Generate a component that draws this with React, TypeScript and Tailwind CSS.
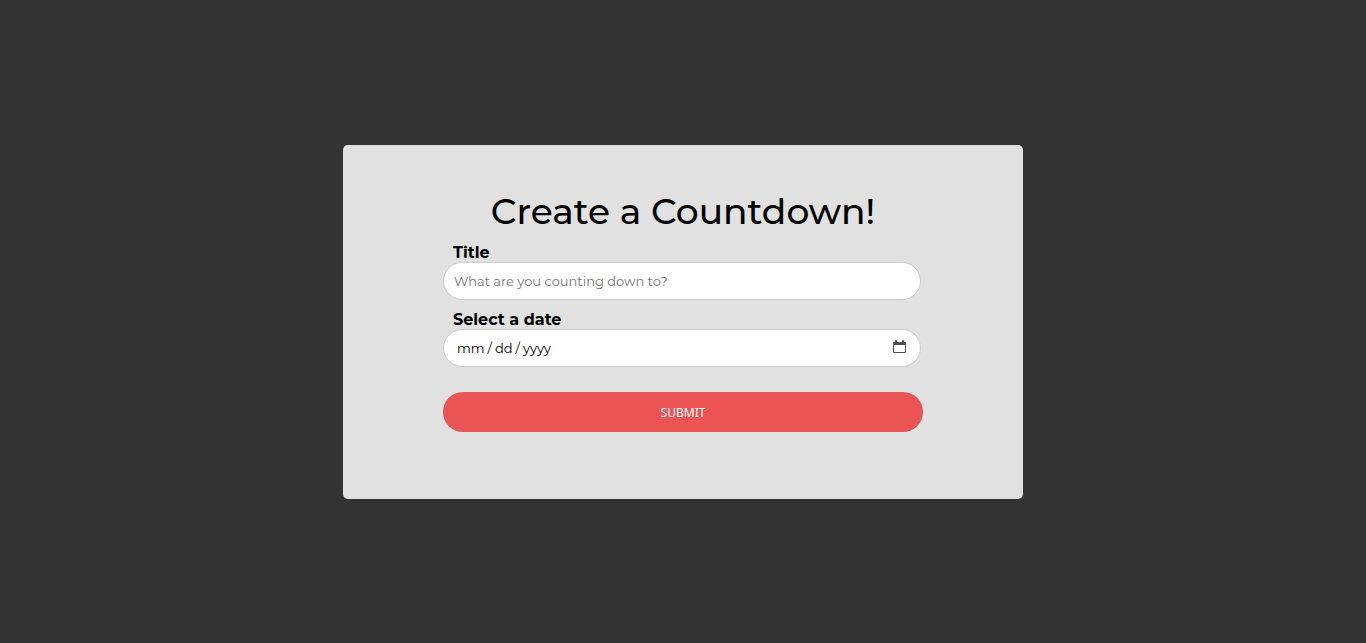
import React from "react";

const labelClass = "block pl-[10px] text-[16px] leading-[18px] font-bold";
const fieldClass = "block h-[38px] w-full rounded-full border border-[#cccccc] bg-white px-[10px] text-[13px]";

export default function App() {
  return (
    <main className="flex min-h-screen items-center justify-center bg-[#333333] font-['Montserrat','Open_Sans',sans-serif] text-black">
      <form
        className="w-full max-w-[680px] rounded-[5px] bg-[#e1e1e1] px-[100px] pt-11 pb-[67px]"
        onSubmit={(e) => e.preventDefault()}
      >
        <h1 className="text-center text-[36px] leading-[44px] font-medium">Create a Countdown!</h1>
        <div className="mt-[11px] pr-[2px]">
          <label htmlFor="title" className={labelClass}>
            Title
          </label>
          <input
            id="title"
            type="text"
            placeholder="What are you counting down to?"
            className={`${fieldClass} placeholder:text-[#757575]`}
          />
        </div>
        <div className="mt-[11px] pr-[2px]">
          <label htmlFor="date" className={labelClass}>
            Select a date
          </label>
          <div className="relative">
            <input
              id="date"
              type="date"
              className={`${fieldClass} pt-[2px] [&::-webkit-calendar-picker-indicator]:opacity-0 [&::-webkit-datetime-edit-fields-wrapper]:pl-[2px] [&::-webkit-datetime-edit-text]:px-[2px]`}
            />
            <svg
              aria-hidden="true"
              viewBox="0 0 13 13"
              className="pointer-events-none absolute top-[11px] right-[15px] h-[13px] w-[13px]"
              fill="#505050"
            >
              <path d="M0 3Q0 2 1 2H2V0.3H4V2H9V0.3H11V2H12Q13 2 13 3V12Q13 13 12 13H1Q0 13 0 12ZM1 5V12H12V5Z" fillRule="evenodd" />
            </svg>
          </div>
        </div>
        <button
          type="submit"
          className="mt-[25px] block h-10 w-full rounded-full bg-[#ea5455] pt-[2px] font-['Noto_Sans',sans-serif] text-[12px] text-white"
        >
          SUBMIT
        </button>
      </form>
    </main>
  );
}
